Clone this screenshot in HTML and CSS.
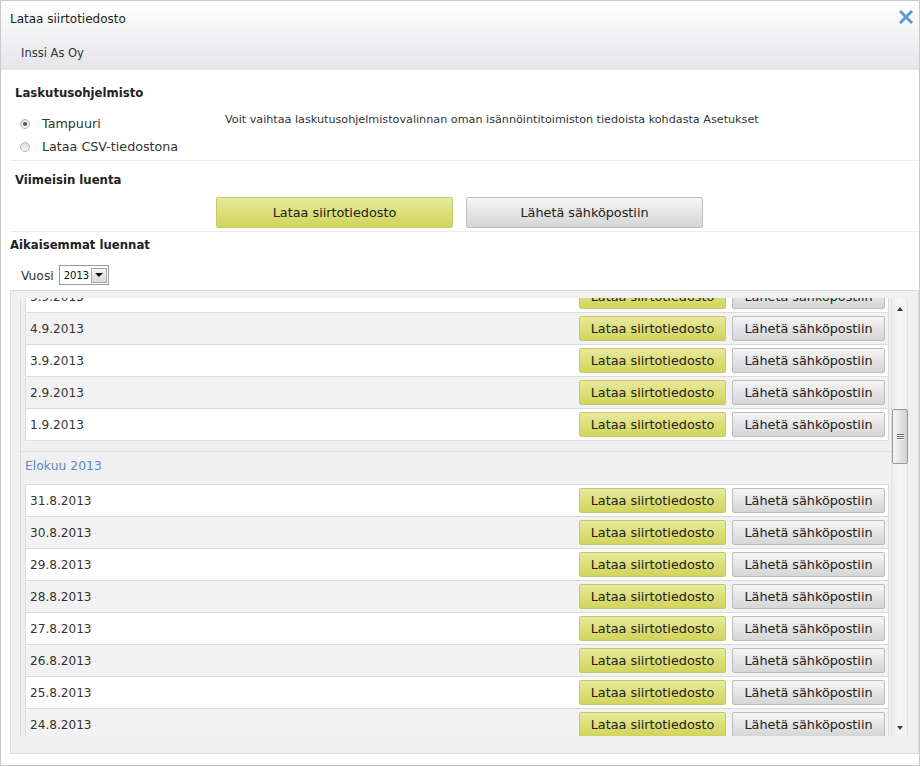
FILE: index.html
```html
<!DOCTYPE html>
<html lang="fi">
<head>
<meta charset="utf-8">
<title>Lataa siirtotiedosto</title>
<link rel="stylesheet" href="styles.css">
</head>
<body>
<div class="dialog">
  <div class="header">
    <div class="title-row">
      <span class="title">Lataa siirtotiedosto</span>
      <svg class="close" width="14" height="14" viewBox="0 0 14 14"><path d="M2 2 L12 12 M12 2 L2 12" stroke="#5b9bd5" stroke-width="3" stroke-linecap="square"/></svg>
    </div>
    <div class="subtitle">Inssi As Oy</div>
  </div>

  <div class="sec-software">
    <h2 class="heading">Laskutusohjelmisto</h2>
    <div class="software-row">
      <div class="options">
        <div class="option"><span class="radio checked"></span><span>Tampuuri</span></div>
        <div class="option"><span class="radio"></span><span>Lataa CSV-tiedostona</span></div>
      </div>
      <div class="info">Voit vaihtaa laskutusohjelmistovalinnan oman isännöintitoimiston tiedoista kohdasta Asetukset</div>
    </div>
  </div>
  <div class="divider"></div>

  <div class="sec-latest">
    <h2 class="heading">Viimeisin luenta</h2>
    <div class="main-buttons">
      <button class="btn btn-yellow btn-big">Lataa siirtotiedosto</button>
      <button class="btn btn-gray btn-big">Lähetä sähköpostiin</button>
    </div>
  </div>
  <div class="divider"></div>

  <div class="sec-previous">
    <h2 class="heading heading-prev">Aikaisemmat luennat</h2>
    <div class="year-row">
      <span class="year-label">Vuosi</span>
      <span class="select"><span class="select-value">2013</span><span class="select-btn"><span class="tri-down"></span></span></span>
    </div>
    <div class="listbox">
      <div class="viewport">
        <div class="list">
          <div class="list-content">
            <div class="month">
              <div class="month-title">Syyskuu 2013</div>
              <div class="rows">
                <div class="row"><span class="date">9.9.2013</span><span class="actions"><button class="btn btn-yellow btn-small">Lataa siirtotiedosto</button><button class="btn btn-gray btn-small wide">Lähetä sähköpostiin</button></span></div>
                <div class="row"><span class="date">8.9.2013</span><span class="actions"><button class="btn btn-yellow btn-small">Lataa siirtotiedosto</button><button class="btn btn-gray btn-small wide">Lähetä sähköpostiin</button></span></div>
                <div class="row"><span class="date">7.9.2013</span><span class="actions"><button class="btn btn-yellow btn-small">Lataa siirtotiedosto</button><button class="btn btn-gray btn-small wide">Lähetä sähköpostiin</button></span></div>
                <div class="row"><span class="date">6.9.2013</span><span class="actions"><button class="btn btn-yellow btn-small">Lataa siirtotiedosto</button><button class="btn btn-gray btn-small wide">Lähetä sähköpostiin</button></span></div>
                <div class="row"><span class="date">5.9.2013</span><span class="actions"><button class="btn btn-yellow btn-small">Lataa siirtotiedosto</button><button class="btn btn-gray btn-small wide">Lähetä sähköpostiin</button></span></div>
                <div class="row"><span class="date">4.9.2013</span><span class="actions"><button class="btn btn-yellow btn-small">Lataa siirtotiedosto</button><button class="btn btn-gray btn-small wide">Lähetä sähköpostiin</button></span></div>
                <div class="row"><span class="date">3.9.2013</span><span class="actions"><button class="btn btn-yellow btn-small">Lataa siirtotiedosto</button><button class="btn btn-gray btn-small wide">Lähetä sähköpostiin</button></span></div>
                <div class="row"><span class="date">2.9.2013</span><span class="actions"><button class="btn btn-yellow btn-small">Lataa siirtotiedosto</button><button class="btn btn-gray btn-small wide">Lähetä sähköpostiin</button></span></div>
                <div class="row"><span class="date">1.9.2013</span><span class="actions"><button class="btn btn-yellow btn-small">Lataa siirtotiedosto</button><button class="btn btn-gray btn-small wide">Lähetä sähköpostiin</button></span></div>
              </div>
            </div>
            <div class="month">
              <div class="month-title">Elokuu 2013</div>
              <div class="rows">
                <div class="row"><span class="date">31.8.2013</span><span class="actions"><button class="btn btn-yellow btn-small">Lataa siirtotiedosto</button><button class="btn btn-gray btn-small wide">Lähetä sähköpostiin</button></span></div>
                <div class="row"><span class="date">30.8.2013</span><span class="actions"><button class="btn btn-yellow btn-small">Lataa siirtotiedosto</button><button class="btn btn-gray btn-small wide">Lähetä sähköpostiin</button></span></div>
                <div class="row"><span class="date">29.8.2013</span><span class="actions"><button class="btn btn-yellow btn-small">Lataa siirtotiedosto</button><button class="btn btn-gray btn-small wide">Lähetä sähköpostiin</button></span></div>
                <div class="row"><span class="date">28.8.2013</span><span class="actions"><button class="btn btn-yellow btn-small">Lataa siirtotiedosto</button><button class="btn btn-gray btn-small wide">Lähetä sähköpostiin</button></span></div>
                <div class="row"><span class="date">27.8.2013</span><span class="actions"><button class="btn btn-yellow btn-small">Lataa siirtotiedosto</button><button class="btn btn-gray btn-small wide">Lähetä sähköpostiin</button></span></div>
                <div class="row"><span class="date">26.8.2013</span><span class="actions"><button class="btn btn-yellow btn-small">Lataa siirtotiedosto</button><button class="btn btn-gray btn-small wide">Lähetä sähköpostiin</button></span></div>
                <div class="row"><span class="date">25.8.2013</span><span class="actions"><button class="btn btn-yellow btn-small">Lataa siirtotiedosto</button><button class="btn btn-gray btn-small wide">Lähetä sähköpostiin</button></span></div>
                <div class="row"><span class="date">24.8.2013</span><span class="actions"><button class="btn btn-yellow btn-small">Lataa siirtotiedosto</button><button class="btn btn-gray btn-small wide">Lähetä sähköpostiin</button></span></div>
                <div class="row"><span class="date">23.8.2013</span><span class="actions"><button class="btn btn-yellow btn-small">Lataa siirtotiedosto</button><button class="btn btn-gray btn-small wide">Lähetä sähköpostiin</button></span></div>
              </div>
            </div>
          </div>
        </div>
        <div class="scrollbar">
          <div class="sb-btn sb-up"><span class="tri-up"></span></div>
          <div class="sb-space-top"></div>
          <div class="sb-thumb"><span class="grip"></span><span class="grip"></span><span class="grip"></span></div>
          <div class="sb-space"></div>
          <div class="sb-btn sb-down"><span class="tri-down small"></span></div>
        </div>
      </div>
    </div>
  </div>
</div>
</body>
</html>
```

FILE: styles.css
```css
* { box-sizing: border-box; }
html, body { margin: 0; padding: 0; background: #fff; }
body {
  font-family: "DejaVu Sans", Verdana, sans-serif;
  color: #333;
  font-size: 12px;
}
.dialog {
  width: 920px;
  height: 766px;
  border: 1px solid #c9c9c9;
  overflow: hidden;
  background: #fff;
}
.header {
  height: 69px;
  background: linear-gradient(to bottom, #ffffff 0%, #f3f3f5 45%, #e5e5ea 100%);
}
.title-row {
  height: 36px;
  display: flex;
  align-items: center;
  justify-content: space-between;
  padding: 0 6px 0 9px;
}
.title { font-size: 12px; color: #222; }
.close { display: block; margin-top: -4px; }
.subtitle {
  height: 33px;
  line-height: 33px;
  padding-left: 20px;
  font-size: 11.5px;
  color: #333;
}
.heading {
  margin: 0;
  font-size: 11.7px;
  font-weight: bold;
  line-height: 20px;
  color: #222;
}
.sec-software { padding: 13px 0 0 14px; height: 90px; }
.software-row { display: flex; padding-top: 9px; }
.options { width: 210px; }
.option {
  height: 23px;
  line-height: 23px;
  display: flex;
  align-items: center;
  font-size: 12.7px;
  color: #333;
}
.radio {
  width: 10px;
  height: 10px;
  margin-left: 5px;
  margin-right: 12px;
  border-radius: 50%;
  border: 1px solid #b4b4b4;
  background: linear-gradient(to bottom, #dcdcdc, #f6f6f6);
  display: flex;
  align-items: center;
  justify-content: center;
}
.radio.checked::after {
  content: "";
  width: 4px;
  height: 4px;
  border-radius: 50%;
  background: #555;
}
.info { font-size: 11.2px; line-height: 16px; color: #333; }
.divider { height: 1px; background: #ececec; margin-left: 9px; }
.sec-latest { padding: 9px 0 0 14px; height: 70px; }
.main-buttons {
  display: flex;
  justify-content: center;
  gap: 13px;
  margin-top: 7px;
  margin-left: -15px;
}
.btn {
  font-family: "DejaVu Sans", Verdana, sans-serif;
  color: #222;
  border-radius: 2px;
  padding: 0;
  cursor: pointer;
}
.btn-yellow {
  border: 1px solid #c6c96a;
  background: linear-gradient(to bottom, #e7e99f 0%, #dcdf7a 50%, #d1d45a 100%);
}
.btn-gray {
  border: 1px solid #bdbdbd;
  background: linear-gradient(to bottom, #f5f5f5 0%, #e4e4e4 50%, #d6d6d6 100%);
}
.btn-big { width: 237px; height: 31px; font-size: 12.8px; }
.btn-small { width: 147px; height: 25px; font-size: 12.8px; }
.btn-small.wide { width: 153px; }
.sec-previous { padding: 3px 0 0 9px; }
.heading-prev { line-height: 20px; }
.year-row {
  display: flex;
  align-items: center;
  height: 20px;
  margin-top: 10px;
  padding-left: 11px;
}
.year-label { font-size: 12.3px; color: #333; margin-right: 5px; margin-top: 2px; }
.select {
  width: 50px;
  height: 20px;
  border: 1px solid #9a9a9a;
  display: flex;
  align-items: center;
  justify-content: space-between;
  padding: 0 1px 0 4px;
  background: #fff;
}
.select-value { font-size: 10px; color: #111; }
.select-btn {
  width: 16px;
  height: 15px;
  border: 1px solid #a5a5a5;
  background: linear-gradient(to bottom, #f4f4f4, #d9d9d9);
  display: flex;
  align-items: center;
  justify-content: center;
}
.tri-down {
  width: 0; height: 0;
  border-left: 4px solid transparent;
  border-right: 4px solid transparent;
  border-top: 4px solid #111;
}
.tri-down.small { border-left-width: 3.5px; border-right-width: 3.5px; border-top-color: #444; }
.tri-up {
  width: 0; height: 0;
  border-left: 3.5px solid transparent;
  border-right: 3.5px solid transparent;
  border-bottom: 4px solid #333;
}
.listbox {
  margin-top: 5px;
  width: 909px;
  height: 464px;
  border: 1px solid #dcdcdc;
  background: #f0f0f0;
  padding: 7px 10px 17px 9px;
}
.viewport { display: flex; height: 438px; }
.list {
  flex: 1;
  overflow: hidden;
  border-left: 1px solid #dcdcdc;
}
.list-content { margin-top: -179px; }
.month {
  border-top: 1px solid #dcdcdc;
  padding: 0 2px 10px 4px;
}
.month-title {
  height: 32px;
  line-height: 28px;
  font-size: 12.4px;
  color: #5b8ac7;
}
.rows { border: 1px solid #dcdcdc; border-bottom: 0; }
.row {
  height: 32px;
  border-bottom: 1px solid #dcdcdc;
  display: flex;
  align-items: center;
  justify-content: space-between;
  padding: 0 3px 0 4px;
  background: #fff;
}
.row:nth-child(even) { background: #f2f2f2; }
.date { font-size: 12.1px; color: #333; }
.actions { display: flex; gap: 6px; }
.scrollbar {
  width: 17px;
  border-left: 1px solid #e2e2e2;
  border-right: 1px solid #e2e2e2;
  background: linear-gradient(to right, #ececec, #f7f7f7 50%, #eeeeee);
  display: flex;
  flex-direction: column;
}
.sb-btn {
  height: 17px;
  display: flex;
  align-items: center;
  justify-content: center;
}
.sb-up { align-items: flex-end; padding-bottom: 4px; }
.sb-down { align-items: flex-start; padding-top: 7px; }
.sb-space-top { height: 94px; }
.sb-thumb {
  height: 55px;
  margin: 0 -1px 0 0;
  border: 1px solid #979797;
  border-radius: 2px;
  background: linear-gradient(to right, #f6f6f6, #e2e2e2 60%, #d2d2d2);
  display: flex;
  flex-direction: column;
  align-items: center;
  justify-content: center;
  gap: 1px;
}
.grip { width: 7px; height: 1px; background: #6a6a6a; box-shadow: 0 1px 0 #fff; }
.sb-space { flex: 1; }
```
